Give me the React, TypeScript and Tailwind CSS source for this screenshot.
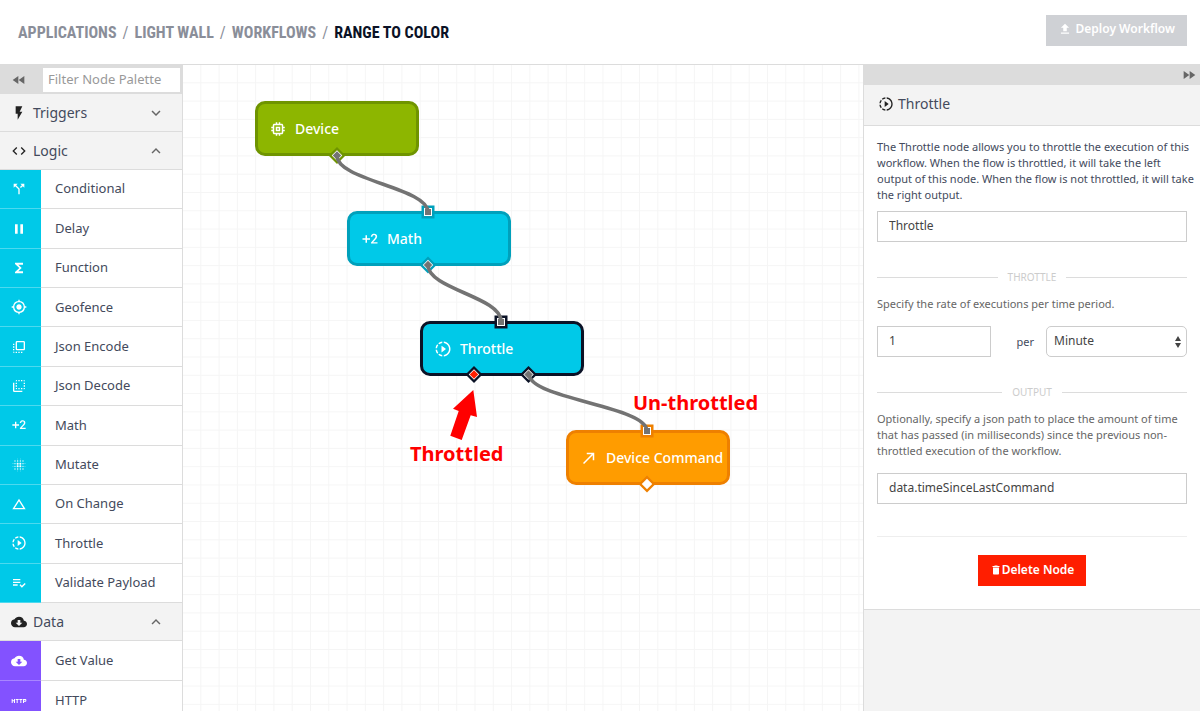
import React from "react";
import type { IconType } from "react-icons";
import {
  MdBlurOn,
  MdCallMade,
  MdCallSplit,
  MdChangeHistory,
  MdCloudDownload,
  MdCode,
  MdDelete,
  MdExposurePlus2,
  MdFastForward,
  MdFastRewind,
  MdFileUpload,
  MdFlashOn,
  MdFlipToBack,
  MdFlipToFront,
  MdFunctions,
  MdGpsFixed,
  MdHttp,
  MdKeyboardArrowDown,
  MdKeyboardArrowUp,
  MdMemory,
  MdPause,
  MdPlaylistAddCheck,
  MdSlowMotionVideo,
} from "react-icons/md";

type PaletteItem = { label: string; icon: IconType };

const logicItems: PaletteItem[] = [
  { label: "Conditional", icon: MdCallSplit },
  { label: "Delay", icon: MdPause },
  { label: "Function", icon: MdFunctions },
  { label: "Geofence", icon: MdGpsFixed },
  { label: "Json Encode", icon: MdFlipToFront },
  { label: "Json Decode", icon: MdFlipToBack },
  { label: "Math", icon: MdExposurePlus2 },
  { label: "Mutate", icon: MdBlurOn },
  { label: "On Change", icon: MdChangeHistory },
  { label: "Throttle", icon: MdSlowMotionVideo },
  { label: "Validate Payload", icon: MdPlaylistAddCheck },
];

const dataItems: PaletteItem[] = [
  { label: "Get Value", icon: MdCloudDownload },
  { label: "HTTP", icon: MdHttp },
];

function Header() {
  const crumbs = ["Applications", "Light Wall", "Workflows"];
  return (
    <header className="flex h-[65px] shrink-0 items-center justify-between border-b border-[#dcdcdc] pr-[13px] pl-[18px]">
      <nav
        aria-label="Breadcrumb"
        className="pt-0.5 font-['Roboto_Condensed','Liberation_Sans_Narrow','Roboto',sans-serif] text-base leading-5 font-bold text-[#8a8e99] uppercase"
      >
        <ol className="flex gap-1.5">
          {crumbs.map((c) => (
            <li key={c} className="flex gap-1.5">
              <a href="#">{c}</a>
              <span className="font-normal">/</span>
            </li>
          ))}
          <li aria-current="page" className="text-[#0b1226]">
            Range to Color
          </li>
        </ol>
      </nav>
      <button
        type="button"
        className="mb-1 flex h-[31px] items-center gap-1 bg-[#cfd1d5] px-3 pb-0.5 text-xs font-semibold text-white"
      >
        <MdFileUpload className="size-3.5" />
        Deploy Workflow
      </button>
    </header>
  );
}

function SectionHeader({ label, icon: Icon, open }: PaletteItem & { open: boolean }) {
  const Chevron = open ? MdKeyboardArrowUp : MdKeyboardArrowDown;
  return (
    <button
      type="button"
      aria-expanded={open}
      className="flex h-[38px] w-full shrink-0 items-center border-b border-[#dcdcdc] bg-[#f3f3f3] pr-[17px] pl-[11px] text-left text-sm text-[#434a5c]"
    >
      <Icon className="mr-1.5 size-4 text-[#222]" />
      {label}
      <Chevron className="ml-auto size-[18px] text-[#666]" />
    </button>
  );
}

function PaletteList({ items, tone, className }: { items: PaletteItem[]; tone: string; className: string }) {
  return (
    <ul className={`grid shrink-0 auto-rows-fr ${className}`}>
      {items.map(({ label, icon: Icon }) => (
        <li key={label} className="flex">
          <span className={`flex w-[41px] items-center border-b border-white/30 pl-[11px] text-white ${tone}`}>
            <Icon className="size-4" />
          </span>
          <span className="flex flex-1 items-center border-b border-[#dcdcdc] pl-3.5 text-[13px] text-[#434a5c]">
            {label}
          </span>
        </li>
      ))}
    </ul>
  );
}

function Palette() {
  return (
    <aside className="flex w-[183px] shrink-0 flex-col overflow-hidden border-r border-[#dcdcdc] bg-white">
      <div className="flex h-[29px] shrink-0 items-center bg-[#dcdcdc] pr-0.5">
        <button type="button" aria-label="Collapse palette" className="flex w-[43px] justify-center pr-1.5 text-[#666]">
          <MdFastRewind className="size-4" />
        </button>
        <input
          type="text"
          aria-label="Filter Node Palette"
          placeholder="Filter Node Palette"
          className="h-6 min-w-0 flex-1 bg-white px-[5px] pb-0.5 text-[13px] text-[#434a5c] placeholder:text-[#999]"
        />
      </div>
      <SectionHeader label="Triggers" icon={MdFlashOn} open={false} />
      <SectionHeader label="Logic" icon={MdCode} open />
      <PaletteList items={logicItems} tone="bg-[#00c9e8]" className="h-[433px]" />
      <SectionHeader label="Data" icon={MdCloudDownload} open />
      <PaletteList items={dataItems} tone="bg-[#8352ff]" className="h-20" />
    </aside>
  );
}

const flowNodes: { label: string; icon: IconType; place: string }[] = [
  { label: "Device", icon: MdMemory, place: "left-[72px] top-[36px] border-[#6f9400] bg-[#8db600]" },
  { label: "Math", icon: MdExposurePlus2, place: "left-[164px] top-[146px] border-[#00a0bb] bg-[#00c9e8]" },
  { label: "Throttle", icon: MdSlowMotionVideo, place: "left-[237px] top-[256px] border-[#0b1226] bg-[#00c9e8]" },
  { label: "Device Command", icon: MdCallMade, place: "left-[383px] top-[365px] border-[#ee8000] bg-[#ff9c00]" },
];

const wires = [
  "M154 91C154 115 245 123 245 147",
  "M245 200C245 224 318 232 318 256",
  "M346 309C346 334 464 341 464 366",
];

function InPort({ x, y, color }: { x: number; y: number; color: string }) {
  return (
    <g transform={`translate(${x} ${y})`}>
      <rect x="-6.5" y="-6.5" width="13" height="13" fill={color} />
      <rect x="-4" y="-4" width="8" height="8" fill="#fff" />
      <rect x="-3" y="-3" width="6" height="6" fill="#737373" />
    </g>
  );
}

function OutPort({ x, y, color, fill }: { x: number; y: number; color: string; fill: string }) {
  return (
    <g transform={`translate(${x} ${y}) rotate(45)`}>
      <rect x="-6" y="-6" width="12" height="12" fill={color} />
      <rect x="-3.700" y="-3.700" width="7.400" height="7.400" fill="#fff" />
      <rect x="-3" y="-3" width="6" height="6" fill={fill} />
    </g>
  );
}

function Canvas() {
  return (
    <main className="relative min-w-0 flex-1 overflow-hidden bg-white">
      <svg aria-hidden="true" className="absolute inset-0 size-full">
        <defs>
          <pattern id="grid" width="18.28" height="18.28" patternUnits="userSpaceOnUse">
            <path d="M17.8 0V18.28M0 17.8H18.28" fill="none" stroke="#f5f5f5" />
          </pattern>
        </defs>
        <rect width="100%" height="100%" fill="url(#grid)" />
      </svg>
      {flowNodes.map(({ label, icon: Icon, place }) => (
        <div
          key={label}
          className={`absolute flex h-[55px] w-[164px] items-center gap-2 rounded-[10px] border-[3px] pl-[11px] text-sm font-medium whitespace-nowrap text-white ${place}`}
        >
          <Icon className="size-[18px] shrink-0" />
          {label}
        </div>
      ))}
      <svg aria-hidden="true" className="pointer-events-none absolute inset-0 size-full">
        <InPort x={245} y={147} color="#00a0bb" />
        <InPort x={318} y={257} color="#0b1226" />
        <InPort x={464} y={366} color="#ee8000" />
        <OutPort x={154} y={90.5} color="#6f9400" fill="#737373" />
        <OutPort x={245} y={200} color="#00a0bb" fill="#737373" />
        <OutPort x={291} y={309.5} color="#0b1226" fill="#ff1e00" />
        <OutPort x={345.5} y={309.5} color="#0b1226" fill="#737373" />
        <OutPort x={464} y={419} color="#ee8000" fill="#fff" />
        {wires.map((d) => (
          <path key={d} d={d} fill="none" stroke="#737373" strokeWidth="3.6" />
        ))}
        <path d="M290.3 325L294 352L287.7 350.3L278.7 375L267.3 370.7L275.7 346L270 343.7Z" fill="#f00" />
      </svg>
      <p className="absolute top-[375px] left-[227px] text-xl font-bold text-[#f00]">Throttled</p>
      <p className="absolute top-[324px] left-[450px] text-xl font-bold text-[#f00]">Un-throttled</p>
    </main>
  );
}

function Divider({ children }: { children: React.ReactNode }) {
  return (
    <h3 className="flex items-center gap-2.5 text-[10px] leading-4 text-[#ccc] uppercase before:h-px before:flex-1 before:bg-[#dcdcdc] after:h-px after:flex-1 after:bg-[#dcdcdc]">
      {children}
    </h3>
  );
}

const field = "h-[31px] border border-[#ccc] bg-white pb-0.5 text-xs text-[#444]";

function Inspector() {
  return (
    <aside className="flex w-[337px] shrink-0 flex-col border-l border-[#dcdcdc] bg-[#f3f3f3]">
      <div className="flex h-5 shrink-0 items-center justify-end bg-[#dcdcdc] pr-[3px]">
        <button type="button" aria-label="Collapse panel" className="text-[#666]">
          <MdFastForward className="size-4" />
        </button>
      </div>
      <h2 className="flex h-[41px] shrink-0 items-center gap-1 border-b border-[#dcdcdc] pb-0.5 pl-3.5 text-sm text-[#434a5c]">
        <MdSlowMotionVideo className="size-4 text-[#222]" />
        Throttle
      </h2>
      <form
        className="flex flex-col border-b border-[#dcdcdc] bg-white px-[13px] pt-[13px] pb-[23px] text-[11px] leading-4"
        onSubmit={(e) => e.preventDefault()}
      >
        <p className="whitespace-nowrap text-[#434a5c]">
          The Throttle node allows you to throttle the execution of this
          <br />
          workflow. When the flow is throttled, it will take the left
          <br />
          output of this node. When the flow is not throttled, it will take
          <br />
          the right output.
        </p>
        <input
          type="text"
          aria-label="Node name"
          defaultValue="Throttle"
          className={`mt-2 mb-[27px] px-[11px] ${field}`}
        />
        <Divider>Throttle</Divider>
        <p className="mt-[11px] text-[#666]">Specify the rate of executions per time period.</p>
        <div className="mt-3.5 mb-[27px] flex items-center">
          <input type="text" aria-label="Executions" defaultValue="1" className={`w-[114px] px-[11px] ${field}`} />
          <label htmlFor="period" className="flex-1 pr-3 text-right text-[#434a5c]">
            per
          </label>
          <div className="relative w-[141px]">
            <select id="period" defaultValue="Minute" className={`w-full appearance-none rounded-[5px] px-[7px] ${field}`}>
              <option>Second</option>
              <option>Minute</option>
              <option>Hour</option>
            </select>
            <svg
              aria-hidden="true"
              viewBox="0 0 6 12"
              className="pointer-events-none absolute top-2.5 right-1.5 h-3 w-1.5 fill-[#444]"
            >
              <path d="M3 0L6 5H0ZM3 12L0 7H6Z" />
            </svg>
          </div>
        </div>
        <Divider>Output</Divider>
        <p className="mt-[11px] whitespace-nowrap text-[#666]">
          Optionally, specify a json path to place the amount of time
          <br />
          that has passed (in milliseconds) since the previous non-
          <br />
          throttled execution of the workflow.
        </p>
        <input
          type="text"
          aria-label="Output path"
          defaultValue="data.timeSinceLastCommand"
          className={`mt-3.5 mb-8 px-[11px] ${field}`}
        />
        <hr className="mb-[18px] border-[#eee]" />
        <button
          type="button"
          className="flex h-[31px] items-center self-center bg-[#ff1e00] px-3 pb-0.5 text-xs font-semibold text-white"
        >
          <MdDelete className="size-3" />
          Delete Node
        </button>
      </form>
    </aside>
  );
}

export default function App() {
  return (
    <div className="flex h-screen flex-col overflow-hidden bg-white font-['Noto_Sans',sans-serif]">
      <Header />
      <div className="flex min-h-0 flex-1">
        <Palette />
        <Canvas />
        <Inspector />
      </div>
    </div>
  );
}
